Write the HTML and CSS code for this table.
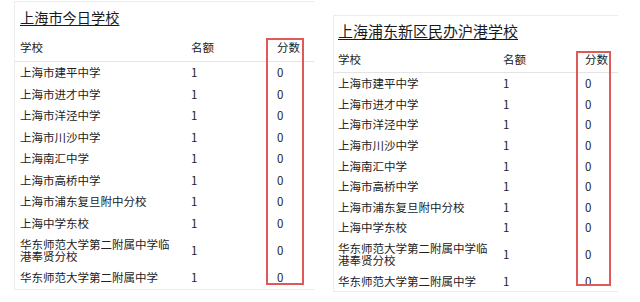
FILE: index.html
```html
<!DOCTYPE html>
<html lang="zh-CN">
<head>
<meta charset="utf-8">
<title>学校名额</title>
<link rel="stylesheet" href="styles.css">
</head>
<body>
<div class="page">
  <section class="panel panel-a">
    <h2 class="title">上海市今日学校</h2>
    <div class="table">
      <div class="th c1">学校</div><div class="th">名额</div><div class="th">分数</div>
      <div class="td c1">上海市建平中学</div><div class="td">1</div><div class="td">0</div>
      <div class="td c1">上海市进才中学</div><div class="td">1</div><div class="td">0</div>
      <div class="td c1">上海市洋泾中学</div><div class="td">1</div><div class="td">0</div>
      <div class="td c1">上海市川沙中学</div><div class="td">1</div><div class="td">0</div>
      <div class="td c1">上海南汇中学</div><div class="td">1</div><div class="td">0</div>
      <div class="td c1">上海市高桥中学</div><div class="td">1</div><div class="td">0</div>
      <div class="td c1">上海市浦东复旦附中分校</div><div class="td">1</div><div class="td">0</div>
      <div class="td c1">上海中学东校</div><div class="td">1</div><div class="td">0</div>
      <div class="td c1">华东师范大学第二附属中学临港奉贤分校</div><div class="td">1</div><div class="td">0</div>
      <div class="td c1">华东师范大学第二附属中学</div><div class="td">1</div><div class="td">0</div>
    </div>
    <div class="mark"></div>
  </section>
  <section class="panel panel-b">
    <h2 class="title">上海浦东新区民办沪港学校</h2>
    <div class="table">
      <div class="th c1">学校</div><div class="th">名额</div><div class="th">分数</div>
      <div class="td c1">上海市建平中学</div><div class="td">1</div><div class="td">0</div>
      <div class="td c1">上海市进才中学</div><div class="td">1</div><div class="td">0</div>
      <div class="td c1">上海市洋泾中学</div><div class="td">1</div><div class="td">0</div>
      <div class="td c1">上海市川沙中学</div><div class="td">1</div><div class="td">0</div>
      <div class="td c1">上海南汇中学</div><div class="td">1</div><div class="td">0</div>
      <div class="td c1">上海市高桥中学</div><div class="td">1</div><div class="td">0</div>
      <div class="td c1">上海市浦东复旦附中分校</div><div class="td">1</div><div class="td">0</div>
      <div class="td c1">上海中学东校</div><div class="td">1</div><div class="td">0</div>
      <div class="td c1">华东师范大学第二附属中学临港奉贤分校</div><div class="td">1</div><div class="td">0</div>
      <div class="td c1">华东师范大学第二附属中学</div><div class="td">1</div><div class="td">0</div>
    </div>
    <div class="mark"></div>
  </section>
</div>
</body>
</html>
```
FILE: styles.css
```css
html, body {
  margin: 0;
  padding: 0;
  background: #ffffff;
}
body {
  font-family: "Noto Sans CJK SC", "Noto Sans", sans-serif;
  color: #222222;
}
.page {
  display: flex;
  align-items: flex-start;
  gap: 19px;
  padding-left: 14px;
}
.panel {
  position: relative;
  border-left: 1px solid #ececec;
  border-top: 1px solid #ececec;
  border-bottom: 1px solid #ececec;
  box-sizing: border-box;
}
.panel-a {
  width: 300px;
  margin-top: 1px;
}
.panel-b {
  width: 285px;
  margin-top: 15px;
}
.title {
  margin: 0;
  font-weight: normal;
  color: #1a1a1a;
  text-decoration: underline;
  text-underline-offset: 2px;
  text-decoration-thickness: 1px;
  height: 30px;
  line-height: 30px;
}
.panel-a .title {
  font-size: 14.2px;
  padding-left: 5px;
}
.panel-b .title {
  font-size: 15px;
  padding-left: 4px;
}
.table {
  display: grid;
  font-size: 11.5px;
}
.panel-a .table {
  grid-template-columns: 176px 86px 1fr;
}
.panel-b .table {
  grid-template-columns: 169px 82px 1fr;
}
.th {
  border-bottom: 1px solid #e4e4e4;
  display: flex;
  align-items: center;
}
.panel-a .th {
  height: 29px;
}
.panel-b .th {
  height: 26px;
}
.panel-a .td {
  line-height: 11.5px;
  padding: 5px 0;
  display: flex;
  align-items: center;
}
.panel-b .td {
  line-height: 12px;
  padding: 4.3px 0;
  display: flex;
  align-items: center;
}
.panel-a .c1 {
  padding-left: 5px;
  padding-right: 14px;
}
.panel-b .c1 {
  padding-left: 4px;
  padding-right: 12px;
}
.mark {
  position: absolute;
  box-sizing: border-box;
  border: 2px solid #e05858;
}
.panel-a .mark {
  left: 251px;
  top: 36px;
  width: 38px;
  height: 247px;
}
.panel-b .mark {
  left: 242px;
  top: 35px;
  width: 35px;
  height: 235px;
}
```
